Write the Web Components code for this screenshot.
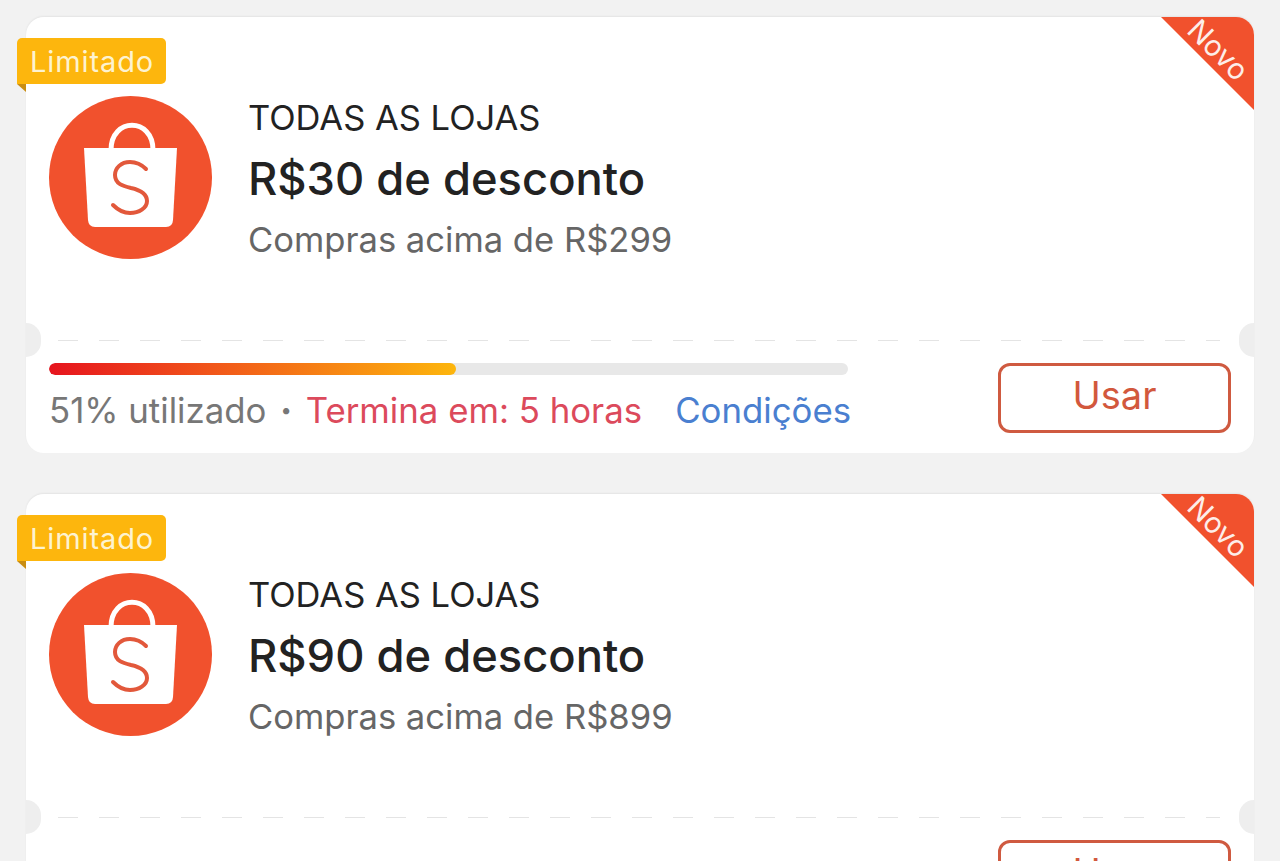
<!DOCTYPE html>
<html>
<head>
<meta charset="utf-8">
<style>
html, body { margin: 0; height: 100%; overflow: hidden; background: #f2f2f2; }
body { font-family: Inter, "Liberation Sans", sans-serif; }
</style>
</head>
<body>
<voucher-list>
    <voucher-card amount="R$30 de desconto" minimum="Compras acima de R$299" used="51"></voucher-card>
    <voucher-card amount="R$90 de desconto" minimum="Compras acima de R$899"></voucher-card>
</voucher-list>

<template id="voucherListTemplate">
    <style>
    :host {
        display: flex;
        flex-direction: column;
        gap: 41px;
        padding: 17px 26px 0 26px;
    }
    </style>
    <slot></slot>
</template>

<template id="shopLogoTemplate">
    <style>
    :host { display: block; width: 163px; height: 163px; flex: none; }
    svg { display: block; }
    </style>
    <svg width="163" height="163" viewBox="0 0 163 163">
        <circle cx="81.5" cy="81.5" r="81.5" fill="#f1512d"/>
        <path d="M62 54 C62 21 104 21 104 54" fill="none" stroke="#fff" stroke-width="5"/>
        <path d="M35 52 H128 L124 124 Q123.600 131 117 131 H46 Q39.500 131 39 124 Z" fill="#fff"/>
        <path d="M97 73 C92 68 87 66 81 66 C72 66 66 72 66 79 C66 88 74 90 82 92 C91 94 98 98 98 105 C98 112 90 117 81 117 C74 117 69 114 64 109" fill="none" stroke="#e2583b" stroke-width="4" stroke-linecap="round"/>
    </svg>
</template>

<template id="voucherCardTemplate">
    <style>
    :host {
        display: block;
        position: relative;
        height: 436px;
        flex: none;
        background: #fff;
        border-radius: 18px;
        box-shadow: 0 -1px 2px rgba(0,0,0,0.06);
    }
    .corner {
        position: absolute;
        top: 0;
        right: 0;
        width: 93px;
        height: 93px;
        overflow: hidden;
        border-top-right-radius: 18px;
    }
    .corner svg { display: block; }
    .corner span {
        position: absolute;
        left: 17px;
        top: 17px;
        width: 80px;
        text-align: center;
        color: #fdeee9;
        font-size: 29px;
        line-height: 32px;
        transform: rotate(45deg);
    }
    .limit {
        position: absolute;
        left: -9px;
        top: 21px;
        height: 46px;
        padding: 0 12px 0 13px;
        display: flex;
        align-items: center;
        background: #fdb60d;
        border-radius: 5px 5px 5px 0;
        color: #fdf3d0;
        font-size: 29px;
        letter-spacing: 0.9px;
    }
    .fold {
        position: absolute;
        left: -9px;
        top: 67px;
        width: 0;
        height: 0;
        border-top: 8px solid #c98d12;
        border-left: 9px solid transparent;
    }
    .notch {
        position: absolute;
        top: 306px;
        width: 15px;
        height: 34px;
        background: #eeeeee;
    }
    .notch.left { left: 0; border-radius: 0 17px 17px 0 / 0 17px 17px 0; }
    .notch.right { right: 0; border-radius: 17px 0 0 17px / 17px 0 0 17px; }
    .top {
        height: 323px;
        box-sizing: border-box;
        padding: 79px 0 0 23px;
        display: flex;
        gap: 36px;
    }
    .text { display: flex; flex-direction: column; padding-top: 3px; }
    .scope { font-size: 34.500px; line-height: 38px; color: #222; }
    .amount { font-size: 45.300px; font-weight: 500; line-height: 54px; color: #222; margin-top: 15px; }
    .minimum { font-size: 34.600px; line-height: 40px; color: #666; margin-top: 13px; }
    .line {
        height: 1px;
        margin: 0 34px 0 32px;
        background: repeating-linear-gradient(90deg, #e4e4e4 0 20px, transparent 20px 41px);
    }
    .bottom {
        display: flex;
        justify-content: space-between;
        padding: 22px 23px 0 23px;
    }
    .info { width: 799px; }
    .bar {
        height: 12px;
        border-radius: 6px;
        background: #e8e8e8;
        overflow: hidden;
    }
    .bar div {
        height: 100%;
        border-radius: 6px;
        background: linear-gradient(90deg, #e6141e, #f1561a 40%, #fdb60d);
    }
    :host(.faded) .bar { visibility: hidden; }
    :host(.faded) .meta, :host(.faded) .meta span { color: #fbfbf9; }
    :host(.faded) .sep { background: #fff; }
    .meta {
        display: flex;
        align-items: center;
        margin-top: 13px;
        font-size: 34.800px;
        line-height: 44px;
        color: #777;
        white-space: nowrap;
    }
    .dot { margin: 0 14px; font-size: 20px; }
    .ends { color: #dc4a5c; }
    .sep { width: 3px; height: 34px; background: #e6e6e6; margin: 0 16px 0 17px; }
    .terms { color: #4a7fd0; }
    button {
        width: 233px;
        height: 70px;
        box-sizing: border-box;
        padding: 0 0 6px 0;
        background: #fff;
        border: 3px solid #cf5a40;
        border-radius: 12px;
        color: #d2583d;
        font: inherit;
        font-size: 38px;
    }
    </style>
    <div class="limit">Limitado</div>
    <div class="fold"></div>
    <div class="corner">
        <svg width="93" height="93"><polygon points="0,0 93,0 93,93" fill="#f1512d"/></svg>
        <span>Novo</span>
    </div>
    <div class="notch left"></div>
    <div class="notch right"></div>
    <div class="top">
        <shop-logo></shop-logo>
        <div class="text">
            <div class="scope">TODAS AS LOJAS</div>
            <div class="amount"></div>
            <div class="minimum"></div>
        </div>
    </div>
    <div class="line"></div>
    <div class="bottom">
        <div class="info">
            <div class="bar"><div></div></div>
            <div class="meta">
                <span>51% utilizado</span><span class="dot">•</span><span class="ends">Termina em: 5 horas</span><span class="sep"></span><span class="terms">Condições</span>
            </div>
        </div>
        <button>Usar</button>
    </div>
</template>

<script>
class VoucherList extends HTMLElement {
    constructor() {
        super();
        this._shadowRoot = this.attachShadow({mode: "open"});
        this._shadowRoot.appendChild(document.getElementById("voucherListTemplate").content.cloneNode(true));
    }
}

class ShopLogo extends HTMLElement {
    constructor() {
        super();
        this._shadowRoot = this.attachShadow({mode: "open"});
        this._shadowRoot.appendChild(document.getElementById("shopLogoTemplate").content.cloneNode(true));
    }
}

class VoucherCard extends HTMLElement {
    constructor() {
        super();
        this._shadowRoot = this.attachShadow({mode: "open"});
        this._shadowRoot.appendChild(document.getElementById("voucherCardTemplate").content.cloneNode(true));
    }

    connectedCallback() {
        this._shadowRoot.querySelector(".amount").textContent = this.getAttribute("amount");
        this._shadowRoot.querySelector(".minimum").textContent = this.getAttribute("minimum");
        var used = this.getAttribute("used");
        if (used) {
            this._shadowRoot.querySelector(".bar div").style.width = used + "%";
        } else {
            this.classList.add("faded");
        }
    }
}

customElements.define("shop-logo", ShopLogo);
customElements.define("voucher-card", VoucherCard);
customElements.define("voucher-list", VoucherList);
</script>
</body>
</html>
